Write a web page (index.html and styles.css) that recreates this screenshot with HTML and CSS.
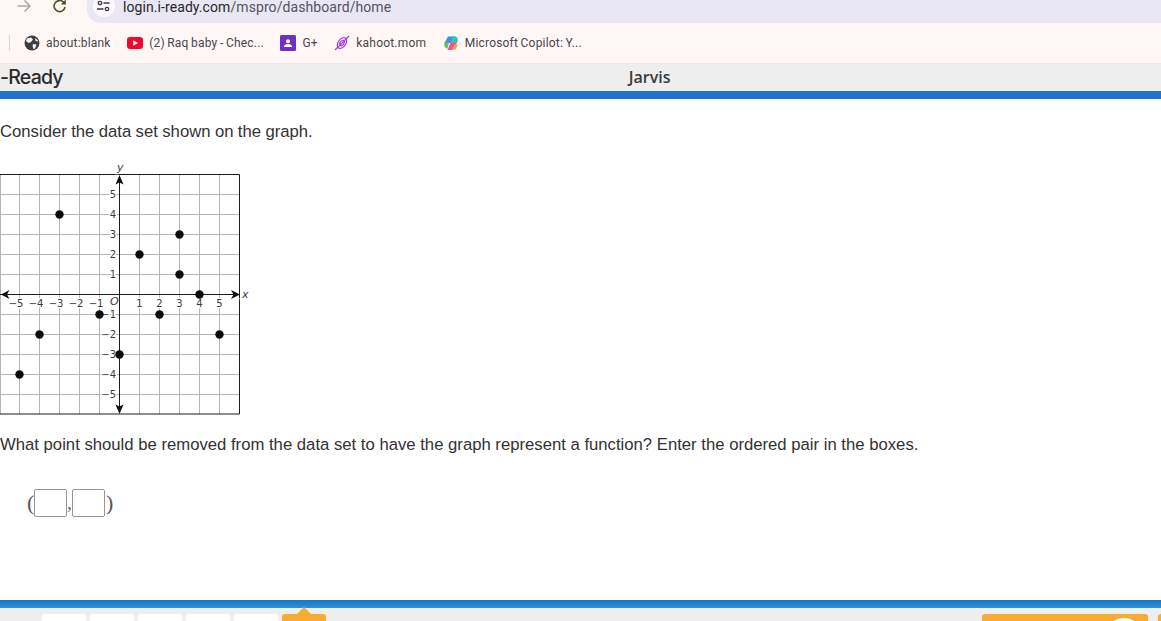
FILE: index.html
```html
<!DOCTYPE html>
<html lang="en">
<head>
<meta charset="utf-8">
<title>i-Ready</title>
<link rel="stylesheet" href="styles.css">
</head>
<body>
<div class="page">
  <div class="toolbar">
    <svg class="nav-icon" width="16" height="16" viewBox="0 0 16 16"><path d="M1.5 8H14M8.5 2.5 14 8l-5.500 5.500" fill="none" stroke="#a9a7ab" stroke-width="1.500"/></svg>
    <svg class="nav-icon reload" width="16" height="16" viewBox="0 0 16 16"><path d="M13 9a5.500 5.500 0 1 1-1.600-4.900L13 5.800" fill="none" stroke="#4c5226" stroke-width="1.600"/><path d="M13.800 1.500v5h-5z" fill="#4c5226"/></svg>
    <div class="omnibox">
      <span class="site-chip">
        <svg width="14" height="14" viewBox="0 0 14 14"><g fill="none" stroke="#3a3a40" stroke-width="1.300"><circle cx="3" cy="4" r="1.700"/><path d="M6.500 4h6M0 10h6.500"/><circle cx="10" cy="10" r="1.700"/></g></svg>
      </span>
      <span class="url">login.i-ready.com<span class="url-path">/mspro/dashboard/home</span></span>
    </div>
  </div>

  <div class="bookmarks">
    <span class="bm-sep"></span>
    <a class="bm">
      <svg width="16" height="16" viewBox="0 0 16 16"><circle cx="8" cy="8" r="7.500" fill="#3c3c42"/><path d="M3 3.500 7 2.500 9 4.500 7 7 4.500 8 2 6zM9 9l3.500.5L11 13.500 9.500 14 8.500 11zM11 3l2.500 2L14 6.500 11.500 6z" fill="#fff7f5"/></svg>
      <span>about:blank</span>
    </a>
    <a class="bm">
      <svg width="16" height="12" viewBox="0 0 16 12"><rect width="16" height="12" rx="3" fill="#f0082f"/><path d="M6.200 3.300v5.400L11 6z" fill="#fff"/></svg>
      <span>(2) Raq baby - Chec...</span>
    </a>
    <a class="bm">
      <svg width="16" height="16" viewBox="0 0 16 16"><rect width="16" height="16" rx="1.500" fill="#6d2fc4"/><circle cx="8" cy="6.200" r="2" fill="#fff"/><path d="M3.800 12c0-2 2-3 4.200-3s4.200 1 4.200 3z" fill="#fff"/></svg>
      <span>G+</span>
    </a>
    <a class="bm">
      <svg width="16" height="16" viewBox="0 0 16 16"><g fill="none" stroke="#a43ee0" stroke-width="1.200"><ellipse cx="8" cy="8" rx="3.800" ry="6" transform="rotate(35 8 8)"/><ellipse cx="8" cy="8" rx="1.800" ry="3" transform="rotate(35 8 8)"/><path d="M1 15 15 1"/></g></svg>
      <span>kahoot.mom</span>
    </a>
    <a class="bm">
      <svg width="16" height="16" viewBox="0 0 16 16"><path d="M5 1.500h5.500L8 8H1.500z" fill="#3f8fe8"/><path d="M10 1c3 0 5 1.500 5 4l-1.500 4H8z" fill="#36c2b8"/><path d="M1.500 7.500H6L4.500 13.500C2 13.500 .500 11 1.500 7.500z" fill="#6cc24f"/><path d="M7.500 7.500h6L11.500 13c-.5 1.200-1.500 2-2.500 2H4.500z" fill="#e8559b"/><path d="M11.500 9.500H15l-2.500 5H9z" fill="#f79a3b"/></svg>
      <span>Microsoft Copilot: Y...</span>
    </a>
  </div>

  <header class="app-header">
    <span class="brand">-Ready</span>
    <span class="student">Jarvis</span>
  </header>
  <div class="blue-rule"></div>

  <main class="question">
    <p class="prompt lead">Consider the data set shown on the graph.</p>
    <svg class="graph" width="250" height="260" viewBox="0 160 250 260">
      <path class="grid" d="M.5 174V414M19.500 174V414M39.500 174V414M59.500 174V414M79.500 174V414M99.500 174V414M139.500 174V414M159.500 174V414M179.500 174V414M199.500 174V414M219.500 174V414M0 194.500H240M0 214.500H240M0 234.500H240M0 254.500H240M0 274.500H240M0 314.500H240M0 334.500H240M0 354.500H240M0 374.500H240M0 394.500H240"/>
      <path class="frame" d="M0 174.500H239.500V414H0"/>
      <g class="lbl mid">
        <text x="16" y="307">−5</text><text x="36" y="307">−4</text><text x="56" y="307">−3</text><text x="76" y="307">−2</text><text x="96" y="307">−1</text>
        <text x="139.500" y="307">1</text><text x="159.500" y="307">2</text><text x="179.500" y="307">3</text><text x="199.500" y="307">4</text><text x="219.500" y="307">5</text>
      </g>
      <g class="lbl end">
        <text x="116" y="198">5</text><text x="116" y="218">4</text><text x="116" y="238">3</text><text x="116" y="258">2</text><text x="116" y="278">1</text>
        <text x="116" y="318">−1</text><text x="116" y="338">−2</text><text x="116" y="358">−3</text><text x="116" y="378">−4</text><text x="116" y="398">−5</text>
      </g>
      <g class="lbl ital">
        <text x="110" y="305">O</text><text x="242" y="298">x</text><text x="117" y="171">y</text>
      </g>
      <path class="axis" d="M0 294.500H238M119.500 178V412"/>
      <path class="arrow" d="M1 294.500 9.500 290 7 294.500 9.500 299zM240 294.500 231 290 233.500 294.500 231 299zM119.500 175 115.500 184.500 119.500 182.500 123.500 184.500zM119.500 414 115.500 404.500 119.500 406.500 123.500 404.500z"/>
      <g class="pts">
        <circle cx="19.500" cy="374.500" r="4.200"/><circle cx="39.500" cy="334.500" r="4.200"/><circle cx="59.500" cy="214.500" r="4.200"/><circle cx="99.500" cy="314.500" r="4.200"/><circle cx="119.500" cy="354.500" r="4.200"/><circle cx="139.500" cy="254.500" r="4.200"/><circle cx="159.500" cy="314.500" r="4.200"/><circle cx="179.500" cy="234.500" r="4.200"/><circle cx="179.500" cy="274.500" r="4.200"/><circle cx="199.500" cy="294.500" r="4.200"/><circle cx="219.500" cy="334.500" r="4.200"/>
      </g>
    </svg>
    <p class="prompt ask">What point should be removed from the data set to have the graph represent a function? Enter the ordered pair in the boxes.</p>
    <div class="pair">
      <span class="paren">(</span><input class="box" type="text" aria-label="x coordinate"><span class="comma">,</span><input class="box" type="text" aria-label="y coordinate"><span class="paren">)</span>
    </div>
  </main>

  <div class="footer-rule"></div>
  <footer class="footer">
    <div class="tabs">
      <span class="tab"></span><span class="tab"></span><span class="tab"></span><span class="tab"></span><span class="tab"></span><span class="tab current"></span>
    </div>
    <div class="actions">
      <span class="action main"><span class="knob"></span></span>
      <span class="action next"></span>
    </div>
  </footer>
</div>
</body>
</html>
```
FILE: styles.css
```css
* { box-sizing: border-box; }
html, body { margin: 0; padding: 0; background: #fff; }
.page {
  width: 1161px;
  height: 621px;
  overflow: hidden;
  display: flex;
  flex-direction: column;
  font-family: "Liberation Sans", Arial, sans-serif;
}

.toolbar {
  height: 23px;
  flex: none;
  display: flex;
  align-items: flex-start;
  background: #fff7f5;
  padding-left: 16px;
}
.nav-icon { margin-top: -2px; flex: none; }
.reload { margin-left: 20px; }
.omnibox {
  margin-left: 19px;
  flex: 1;
  height: 23px;
  display: flex;
  align-items: flex-start;
  gap: 8px;
  background: #e9e7f3;
  border-bottom-left-radius: 14px;
  padding-left: 6px;
}
.site-chip {
  width: 22px;
  height: 22px;
  margin-top: -5px;
  border-radius: 50%;
  background: #fbf9fd;
  display: flex;
  align-items: center;
  justify-content: center;
}
.url {
  margin-top: -2px;
  font: 14px/18px Roboto, sans-serif;
  color: #27262b;
  letter-spacing: .08px;
}
.url-path { color: #55535c; }

.bookmarks {
  height: 40px;
  flex: none;
  display: flex;
  align-items: center;
  gap: 16.500px;
  padding: 0 0 0 9px;
  background: #fff7f5;
  font: 12px/16px Roboto, sans-serif;
  letter-spacing: .2px;
  word-spacing: -.7px;
  color: #47464c;
}
.bm-sep { width: 1px; height: 16px; background: #d8d4ea; margin-right: -2.500px; }
.bm { display: flex; align-items: center; gap: 6px; }

.app-header {
  height: 28px;
  flex: none;
  display: flex;
  align-items: center;
  padding-bottom: 2px;
  background: #eeeeee;
  border-top: 1px solid #f0e6e3;
}
.brand { font: 500 19.500px/26px Inter, sans-serif; letter-spacing: -.8px; color: #2a2a2c; }
.student {
  margin-left: 566px;
  font: 600 16px/22px "Open Sans", sans-serif;
  color: #3a3a3c;
}
.blue-rule { height: 8px; flex: none; background: #1f73cf; }

.question { flex: 1; min-height: 0; color: #333; }
.prompt { margin: 0; font-size: 16.700px; line-height: 20px; }
.lead { margin-top: 23px; word-spacing: -.25px; }
.graph { display: block; margin-top: 18px; }
.ask { margin-top: 15px; }
.pair {
  margin: 33px 0 0 27px;
  display: flex;
  align-items: center;
  font: 22px/30px "Liberation Serif", serif;
  color: #555;
}
.paren { width: 7px; }
.paren:last-child { margin-left: 1px; }
.box {
  width: 33px;
  height: 28px;
  padding: 0;
  border: 1px solid #969696;
  border-radius: 2px;
  background: #fff;
}
.comma { width: 5px; font-size: 18px; text-align: center; }

.grid { fill: none; stroke: #b5b5b5; stroke-width: 1; }
.frame { fill: none; stroke: #1c1c1c; stroke-width: 1; }
.axis { fill: none; stroke: #1c1c1c; stroke-width: 1; }
.arrow { fill: #111; }
.pts { fill: #0c0c0c; }
.lbl {
  font: 10px "DejaVu Sans", sans-serif;
  fill: #3a3a3a;
  stroke: #fff;
  stroke-width: 2.500px;
  paint-order: stroke;
}
.mid { text-anchor: middle; }
.end { text-anchor: end; }
.ital { font-style: italic; font-size: 11px; }

.footer-rule { height: 8px; flex: none; background: linear-gradient(#1c74bf, #2d92dc); }
.footer {
  height: 13px;
  flex: none;
  display: flex;
  justify-content: space-between;
  padding: 6px 0 0 42px;
  background: #eeeeee;
}
.tabs { display: flex; gap: 4px; }
.tab { width: 44px; height: 12px; background: #fff; border-radius: 3px 3px 0 0; }
.tab.current { position: relative; background: #f9ab2d; }
.tab.current::before {
  content: "";
  position: absolute;
  top: -7px;
  left: 15px;
  border: 7px solid transparent;
  border-top: 0;
  border-bottom-color: #f9ab2d;
}
.actions { display: flex; gap: 10px; }
.action { height: 12px; background: #f9ab2d; border-radius: 3px 3px 0 0; position: relative; overflow: hidden; }
.main { width: 166px; }
.next { width: 3px; border-radius: 3px 0 0 0; }
.knob {
  position: absolute;
  top: 4px;
  left: 142px;
  width: 36px;
  height: 36px;
  margin-left: -18px;
  border-radius: 50%;
  background: #fff;
}
```
